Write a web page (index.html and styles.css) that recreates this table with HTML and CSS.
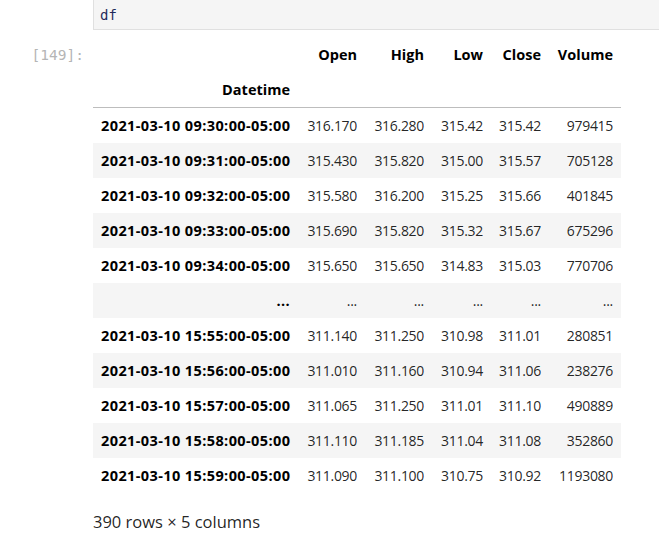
FILE: index.html
```html
<!DOCTYPE html>
<html>
<head>
<meta charset="utf-8">
<link rel="stylesheet" href="styles.css">
</head>
<body>
<div class="cell">
  <div class="row input-row">
    <div class="prompt"></div>
    <div class="input-box"><span class="code">df</span></div>
  </div>
  <div class="row output-row">
    <div class="prompt out-prompt">[149]:</div>
    <div class="output">
      <table class="df">
        <colgroup>
          <col class="c-idx"><col class="c-open"><col class="c-high"><col class="c-low"><col class="c-close"><col class="c-vol">
        </colgroup>
        <thead>
          <tr><th></th><th>Open</th><th>High</th><th>Low</th><th>Close</th><th>Volume</th></tr>
          <tr><th>Datetime</th><th></th><th></th><th></th><th></th><th></th></tr>
        </thead>
        <tbody>
          <tr><th>2021-03-10 09:30:00-05:00</th><td>316.170</td><td>316.280</td><td>315.42</td><td>315.42</td><td>979415</td></tr>
          <tr><th>2021-03-10 09:31:00-05:00</th><td>315.430</td><td>315.820</td><td>315.00</td><td>315.57</td><td>705128</td></tr>
          <tr><th>2021-03-10 09:32:00-05:00</th><td>315.580</td><td>316.200</td><td>315.25</td><td>315.66</td><td>401845</td></tr>
          <tr><th>2021-03-10 09:33:00-05:00</th><td>315.690</td><td>315.820</td><td>315.32</td><td>315.67</td><td>675296</td></tr>
          <tr><th>2021-03-10 09:34:00-05:00</th><td>315.650</td><td>315.650</td><td>314.83</td><td>315.03</td><td>770706</td></tr>
          <tr><th>...</th><td>...</td><td>...</td><td>...</td><td>...</td><td>...</td></tr>
          <tr><th>2021-03-10 15:55:00-05:00</th><td>311.140</td><td>311.250</td><td>310.98</td><td>311.01</td><td>280851</td></tr>
          <tr><th>2021-03-10 15:56:00-05:00</th><td>311.010</td><td>311.160</td><td>310.94</td><td>311.06</td><td>238276</td></tr>
          <tr><th>2021-03-10 15:57:00-05:00</th><td>311.065</td><td>311.250</td><td>311.01</td><td>311.10</td><td>490889</td></tr>
          <tr><th>2021-03-10 15:58:00-05:00</th><td>311.110</td><td>311.185</td><td>311.04</td><td>311.08</td><td>352860</td></tr>
          <tr><th>2021-03-10 15:59:00-05:00</th><td>311.090</td><td>311.100</td><td>310.75</td><td>310.92</td><td>1193080</td></tr>
        </tbody>
      </table>
      <p class="shape">390 rows × 5 columns</p>
    </div>
  </div>
</div>
</body>
</html>
```

FILE: styles.css
```css
html, body {
  margin: 0;
  padding: 0;
  background: #ffffff;
}

body {
  font-family: "Open Sans", "Noto Sans", sans-serif;
  color: rgba(0, 0, 0, 0.87);
}

.row {
  display: flex;
  align-items: flex-start;
}

.prompt {
  width: 84px;
  padding-right: 9px;
  flex: none;
  text-align: right;
  font-family: "DejaVu Sans Mono", "Liberation Mono", monospace;
  font-size: 14.5px;
  line-height: 20px;
  color: #b5b5b5;
}

.input-box {
  flex: 1;
  background: #f5f5f5;
  border: 1px solid #e0e0e0;
  border-top: none;
  border-right: none;
  box-sizing: border-box;
  height: 30px;
  padding: 3px 0 0 6px;
}

.code {
  font-family: "DejaVu Sans Mono", "Liberation Mono", monospace;
  font-size: 14px;
  line-height: 20px;
  color: #1f2a5a;
}

.output-row {
  margin-top: 7px;
}

.out-prompt {
  padding-top: 8px;
}

.output {
  flex: none;
}

.df {
  border-collapse: collapse;
  table-layout: fixed;
  width: 528px;
  font-size: 14.5px;
}

.c-idx { width: 205px; }
.c-open { width: 67px; }
.c-high { width: 67px; }
.c-low { width: 59px; }
.c-close { width: 58px; }
.c-vol { width: 72px; }

.df th,
.df td {
  padding: 7px 8px;
  line-height: 21px;
  height: 21px;
  text-align: right;
  white-space: nowrap;
  vertical-align: middle;
}

.df th {
  font-weight: bold;
  color: #000;
}

.df tbody th {
  letter-spacing: 0.4px;
}

.df td {
  font-weight: normal;
  font-size: 14px;
  letter-spacing: -0.3px;
}

.df thead {
  border-bottom: 1px solid #bdbdbd;
}

.df tbody tr:nth-child(even) {
  background: #f5f5f5;
}

.shape {
  margin: 19px 0 0 0;
  font-size: 16.5px;
  line-height: 20px;
}
```
